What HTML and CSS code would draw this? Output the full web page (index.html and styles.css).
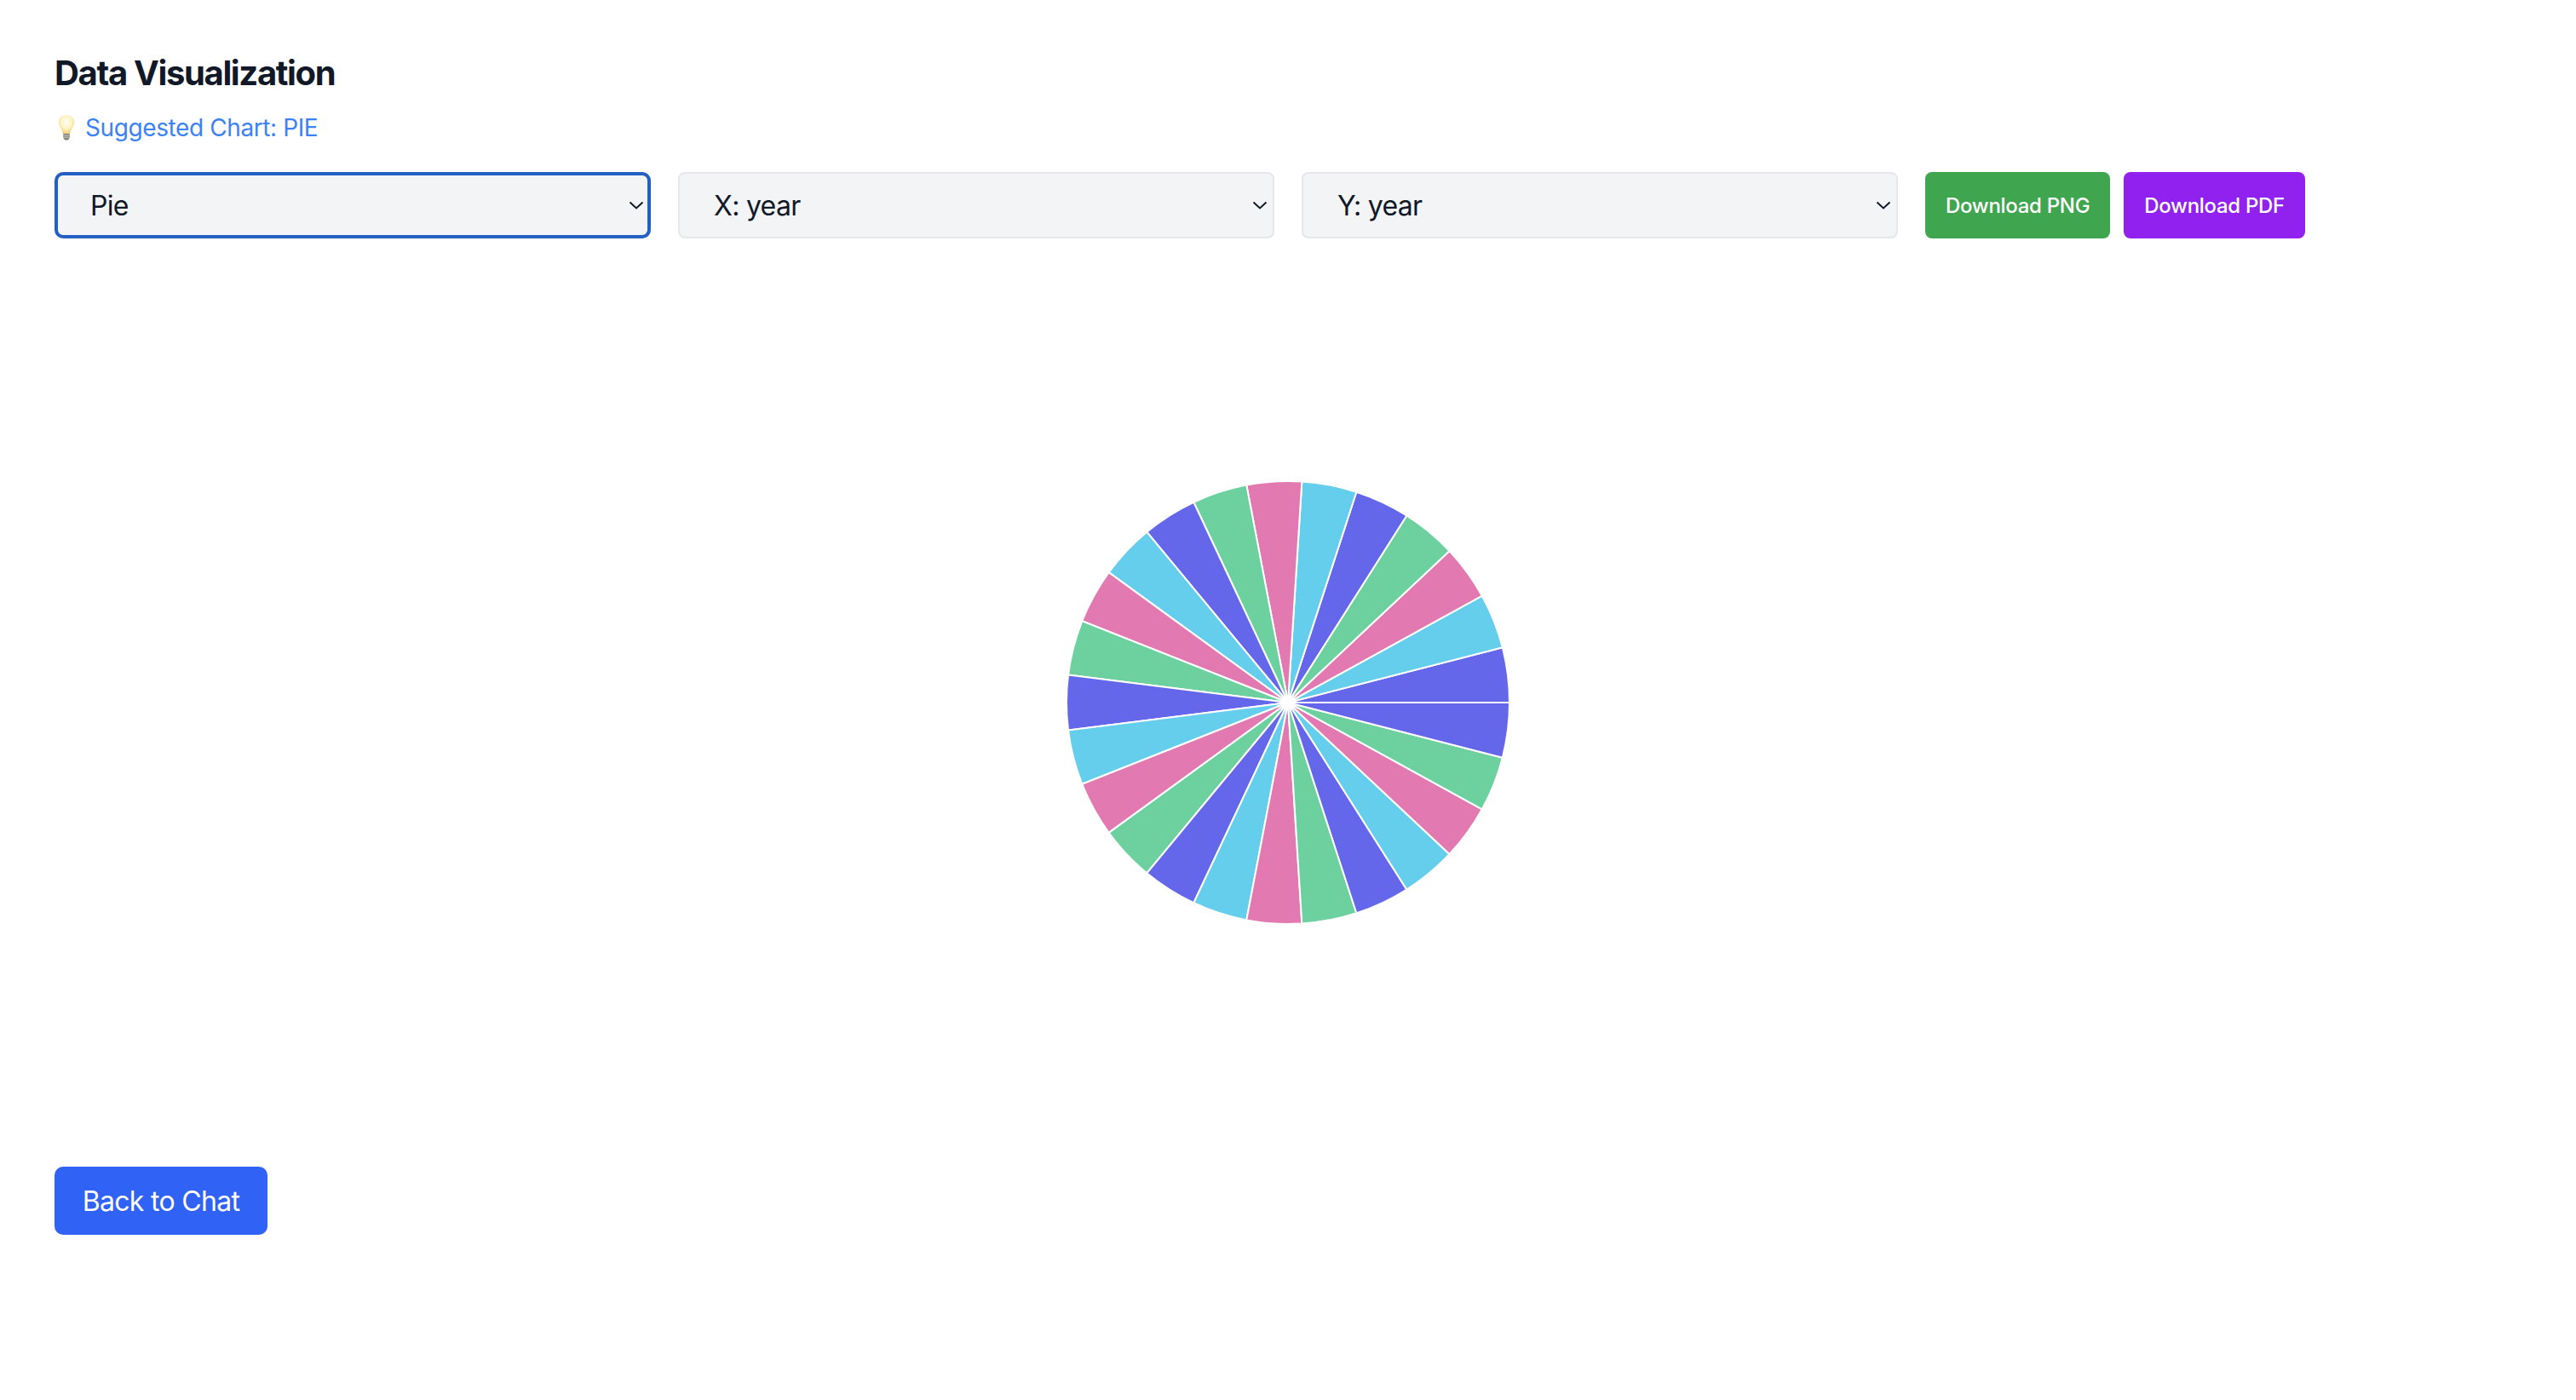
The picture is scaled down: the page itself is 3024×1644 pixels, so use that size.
FILE: index.html
```html
<!DOCTYPE html>
<html lang="en">
<head>
  <meta charset="UTF-8" />
  <meta name="viewport" content="width=device-width, initial-scale=1.0"/>
  <title>Data Visualization</title>
  <link rel="stylesheet" href="styles.css">
</head>
<body>
  <div class="page">
    <h1>Data Visualization</h1>

    <p class="suggestion">
      <svg class="bulb" viewBox="0 0 20 30" aria-hidden="true">
        <defs>
          <radialGradient id="glass" cx="50%" cy="38%" r="60%">
            <stop offset="0%" stop-color="#fffdf0"/>
            <stop offset="60%" stop-color="#fff3c4"/>
            <stop offset="100%" stop-color="#eed27a"/>
          </radialGradient>
        </defs>
        <path d="M10 1C4.800 1 1.500 4.800 1.500 9.300C1.500 13.800 5 16 6.200 21.500H13.800C15 16 18.500 13.800 18.500 9.300C18.500 4.800 15.200 1 10 1Z" fill="url(#glass)"/>
        <path d="M6.400 21.500H13.600V26L11.800 28.500H8.200L6.400 26Z" fill="#85857f"/>
        <path d="M6.400 23.500H13.600M6.400 25.500H13.600" stroke="#d5d5d0" stroke-width="0.8"/>
      </svg>
      <span>Suggested Chart: PIE</span>
    </p>

    <!-- chart controls -->
    <div class="controls">
      <select class="picker picker-active">
        <option>Pie</option>
        <option>Bar</option>
        <option>Line</option>
      </select>
      <select class="picker">
        <option>X: year</option>
      </select>
      <select class="picker">
        <option>Y: year</option>
      </select>
      <div class="downloads">
        <button class="btn-small btn-green">Download PNG</button>
        <button class="btn-small btn-purple">Download PDF</button>
      </div>
    </div>

    <!-- pie: 25 equal slices, counter-clockwise from 3 o'clock -->
    <div class="chart">
      <svg class="pie" viewBox="-262 -262 524 524" role="img" aria-label="Pie chart by year">
        <defs>
          <path id="wedge" d="M0 0L260 0A260 260 0 0 0 251.83 -64.66Z"/>
        </defs>
        <g class="slices">
          <use href="#wedge" class="indigo"/>
          <use href="#wedge" class="cyan" transform="rotate(-14.4)"/>
          <use href="#wedge" class="pink" transform="rotate(-28.8)"/>
          <use href="#wedge" class="green" transform="rotate(-43.2)"/>
          <use href="#wedge" class="indigo" transform="rotate(-57.6)"/>
          <use href="#wedge" class="cyan" transform="rotate(-72)"/>
          <use href="#wedge" class="pink" transform="rotate(-86.4)"/>
          <use href="#wedge" class="green" transform="rotate(-100.8)"/>
          <use href="#wedge" class="indigo" transform="rotate(-115.2)"/>
          <use href="#wedge" class="cyan" transform="rotate(-129.6)"/>
          <use href="#wedge" class="pink" transform="rotate(-144)"/>
          <use href="#wedge" class="green" transform="rotate(-158.4)"/>
          <use href="#wedge" class="indigo" transform="rotate(-172.8)"/>
          <use href="#wedge" class="cyan" transform="rotate(-187.2)"/>
          <use href="#wedge" class="pink" transform="rotate(-201.6)"/>
          <use href="#wedge" class="green" transform="rotate(-216)"/>
          <use href="#wedge" class="indigo" transform="rotate(-230.4)"/>
          <use href="#wedge" class="cyan" transform="rotate(-244.8)"/>
          <use href="#wedge" class="pink" transform="rotate(-259.2)"/>
          <use href="#wedge" class="green" transform="rotate(-273.6)"/>
          <use href="#wedge" class="indigo" transform="rotate(-288)"/>
          <use href="#wedge" class="cyan" transform="rotate(-302.4)"/>
          <use href="#wedge" class="pink" transform="rotate(-316.8)"/>
          <use href="#wedge" class="green" transform="rotate(-331.2)"/>
          <use href="#wedge" class="indigo" transform="rotate(-345.6)"/>
        </g>
      </svg>
    </div>

    <button class="btn-back">Back to Chat</button>
  </div>
</body>
</html>
```

FILE: styles.css
```css
:root {
  --ink: #111827;
  --field: #f3f4f6;
  --field-border: #e5e7eb;
}
* {
  box-sizing: border-box;
  font-family: Inter, 'Noto Sans', sans-serif;
}
body {
  margin: 0;
  background-color: #ffffff;
  color: var(--ink);
}
.page {
  padding: 64px;
}
h1 {
  margin: 0 0 22px;
  font-size: 40px;
  line-height: 44px;
  font-weight: 700;
  letter-spacing: -1.35px;
}
.suggestion {
  display: flex;
  align-items: center;
  gap: 11px;
  margin: 0 0 32px;
  padding-left: 3px;
  height: 40px;
  font-size: 28px;
  letter-spacing: -0.4px;
  color: #3b82f6;
}
.bulb {
  width: 22px;
  height: 32px;
  flex: none;
}
.controls {
  display: flex;
  gap: 32px;
}
.picker {
  appearance: none;
  width: 700px;
  height: 78px;
  padding: 0 40px;
  border: 2px solid var(--field-border);
  border-radius: 8px;
  font-size: 32px;
  letter-spacing: -0.7px;
  color: var(--ink);
  background-color: var(--field);
  background-image: url("data:image/svg+xml,%3Csvg xmlns='http://www.w3.org/2000/svg' viewBox='0 0 18 10'%3E%3Cpath d='M1.500 1.500L9 8.500L16.500 1.500' fill='none' stroke='%23111827' stroke-width='2'/%3E%3C/svg%3E");
  background-repeat: no-repeat;
  background-size: 18px 10px;
  background-position: right 6px center;
}
.picker-active {
  border: 4px solid #2460c4;
  border-radius: 10px;
  padding: 0 38px;
  background-position: right 4px center;
}
.downloads {
  display: flex;
  gap: 16px;
}
button {
  border: none;
  color: #ffffff;
  cursor: pointer;
}
.btn-small {
  height: 78px;
  padding: 0 24px;
  border-radius: 8px;
  font-size: 24px;
  font-weight: 500;
  letter-spacing: -0.3px;
}
.btn-green {
  background-color: #3fa54e;
}
.btn-purple {
  background-color: #9121ef;
}
.chart {
  display: flex;
  justify-content: center;
  align-items: center;
  height: 1000px;
  margin-top: 45px;
  margin-bottom: 45px;
}
.pie {
  width: 524px;
  height: 524px;
}
.slices {
  stroke: #ffffff;
  stroke-width: 2;
  stroke-linejoin: round;
}
.indigo { fill: #6467e9; }
.cyan { fill: #64ceec; }
.pink { fill: #e279b1; }
.green { fill: #6cd09f; }
.btn-back {
  display: block;
  width: 250px;
  height: 80px;
  border-radius: 10px;
  font-size: 32px;
  font-weight: 400;
  letter-spacing: -0.7px;
  background-color: #2f62f5;
}
```
